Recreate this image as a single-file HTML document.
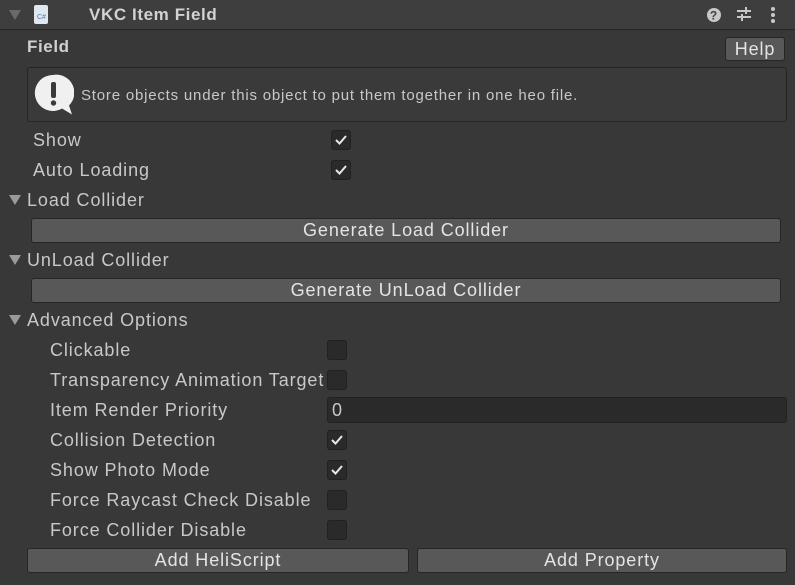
<!DOCTYPE html>
<html><head><style>
body{margin:0;width:795px;height:585px;background:#383838;font-family:"Liberation Sans",sans-serif;color:#c8c8c8;position:relative;overflow:hidden;font-size:18px;letter-spacing:0.9px}
.a{position:absolute;white-space:nowrap}
.lbl{line-height:20px}
.cb{position:absolute;width:18px;height:18px;background:#2a2a2a;border:1px solid #212121;border-radius:3px}
.cb svg{position:absolute;left:2px;top:2px}
.btn{position:absolute;height:23px;background:#585858;border:1px solid #262626;border-radius:3px;text-align:center;line-height:23px;color:#e4e4e4}
.tri{position:absolute;width:0;height:0;border-left:6px solid transparent;border-right:6px solid transparent;border-top:10px solid #9a9a9a}
</style></head><body>
<div class="a" style="left:0;top:0;width:795px;height:29px;background:#3e3e3e;border-bottom:1px solid #262626"></div>
<div class="tri" style="left:9px;top:10px;border-top-color:#6a6a6a"></div>
<div class="a" style="left:34px;top:5px;width:14px;height:19px;background:#dfe7ef;border-radius:2px"><span style="font-size:7px;color:#5a7aa0;position:absolute;left:3px;top:9px;letter-spacing:0">C#</span></div>
<div class="a" style="left:89px;top:5px;font-weight:bold;color:#d2d2d2;line-height:20px;font-size:17px;letter-spacing:0.6px">VKC Item Field</div>
<svg class="a" style="left:706px;top:7px" width="16" height="16"><circle cx="8" cy="8" r="7" fill="#c8c8c8"/><text x="8" y="12.5" font-size="12" font-weight="bold" text-anchor="middle" fill="#3e3e3e" font-family="Liberation Sans">?</text></svg>
<svg class="a" style="left:736px;top:6px" width="16" height="16" stroke="#c8c8c8" stroke-width="2"><line x1="1" y1="5" x2="15" y2="5"/><line x1="1" y1="11" x2="15" y2="11"/><line x1="10" y1="1" x2="10" y2="8"/><line x1="6" y1="8" x2="6" y2="15"/></svg>
<svg class="a" style="left:770px;top:6px" width="6" height="18" fill="#c8c8c8"><circle cx="3" cy="3" r="2"/><circle cx="3" cy="9" r="2"/><circle cx="3" cy="15" r="2"/></svg>
<div class="a lbl" style="left:27px;top:37px;font-weight:bold;color:#d0d0d0;font-size:17px;letter-spacing:0.6px">Field</div>
<div class="btn" style="left:725px;top:37px;width:58px;height:22px;line-height:22px">Help</div>
<div class="a" style="left:27px;top:67px;width:758px;height:53px;background:#3a3a3a;border:1px solid #252525;border-radius:3px"></div>
<svg class="a" style="left:34px;top:74px" width="40" height="42"><path d="M19 1a18 18 0 1 0 9 33.5l10 6-3-9A18 18 0 0 0 19 1z" fill="#f0f0f0"/><rect x="17" y="8" width="5" height="16" rx="2" fill="#3a3a3a"/><circle cx="19.5" cy="29" r="2.7" fill="#3a3a3a"/></svg>
<div class="a lbl" style="left:81px;top:86px;font-size:15px;letter-spacing:0.8px">Store objects under this object to put them together in one heo file.</div>

<div class="a lbl" style="left:33px;top:130px">Show</div>
<div class="cb" style="left:331px;top:130px"><svg width="14" height="14"><path d="M2 7l3.5 3.5L12 3" stroke="#e8e8e8" stroke-width="2" fill="none"/></svg></div>
<div class="a lbl" style="left:33px;top:160px">Auto Loading</div>
<div class="cb" style="left:331px;top:160px"><svg width="14" height="14"><path d="M2 7l3.5 3.5L12 3" stroke="#e8e8e8" stroke-width="2" fill="none"/></svg></div>

<div class="tri" style="left:9px;top:195px"></div>
<div class="a lbl" style="left:27px;top:190px">Load Collider</div>
<div class="btn" style="left:31px;top:218px;width:748px">Generate Load Collider</div>
<div class="tri" style="left:9px;top:255px"></div>
<div class="a lbl" style="left:27px;top:250px">UnLoad Collider</div>
<div class="btn" style="left:31px;top:278px;width:748px">Generate UnLoad Collider</div>
<div class="tri" style="left:9px;top:315px"></div>
<div class="a lbl" style="left:27px;top:310px">Advanced Options</div>

<div class="a lbl" style="left:50px;top:340px">Clickable</div>
<div class="cb" style="left:327px;top:340px"></div>
<div class="a lbl" style="left:50px;top:370px">Transparency Animation Target</div>
<div class="cb" style="left:327px;top:370px"></div>
<div class="a lbl" style="left:50px;top:400px">Item Render Priority</div>
<div class="a" style="left:327px;top:397px;width:458px;height:24px;background:#2a2a2a;border:1px solid #212121;border-radius:3px"></div>
<div class="a lbl" style="left:332px;top:400px">0</div>
<div class="a lbl" style="left:50px;top:430px">Collision Detection</div>
<div class="cb" style="left:327px;top:430px"><svg width="14" height="14"><path d="M2 7l3.5 3.5L12 3" stroke="#e8e8e8" stroke-width="2" fill="none"/></svg></div>
<div class="a lbl" style="left:50px;top:460px">Show Photo Mode</div>
<div class="cb" style="left:327px;top:460px"><svg width="14" height="14"><path d="M2 7l3.5 3.5L12 3" stroke="#e8e8e8" stroke-width="2" fill="none"/></svg></div>
<div class="a lbl" style="left:50px;top:490px">Force Raycast Check Disable</div>
<div class="cb" style="left:327px;top:490px"></div>
<div class="a lbl" style="left:50px;top:520px">Force Collider Disable</div>
<div class="cb" style="left:327px;top:520px"></div>

<div class="btn" style="left:27px;top:548px;width:380px">Add HeliScript</div>
<div class="btn" style="left:417px;top:548px;width:368px">Add Property</div>
</body></html>
